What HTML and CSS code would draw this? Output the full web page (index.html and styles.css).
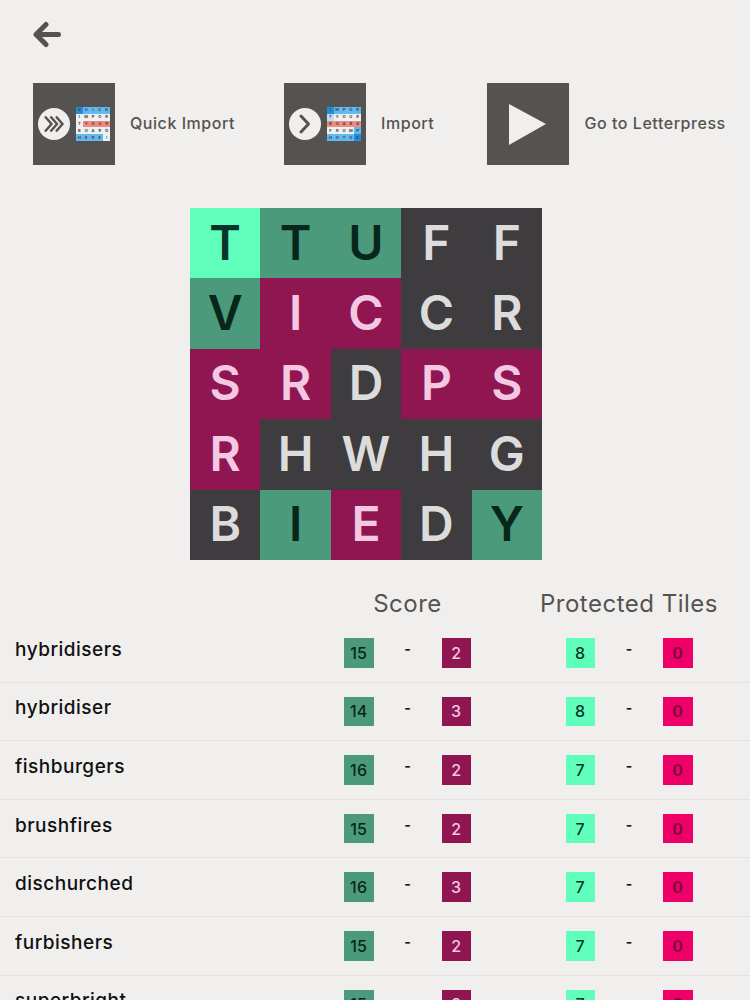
FILE: index.html
```html
<!DOCTYPE html>
<html lang="en">
<head>
  <meta charset="UTF-8" />
  <meta name="viewport" content="width=device-width, initial-scale=1" />
  <title>Letterpress Solver</title>
  <link rel="stylesheet" href="styles.css">
</head>
<body>

  <div class="top">
    <svg class="back" width="30" height="27" viewBox="0 0 30 27">
      <path d="M4 13.500H25.500M13 3.500L3 13.500L13 23.500" fill="none" stroke="#555351" stroke-width="5" stroke-linecap="round" stroke-linejoin="round" />
    </svg>

    <div class="actions">
      <div class="action">
        <div class="tile">
          <svg width="32" height="32" viewBox="0 0 32 32">
            <circle cx="16" cy="16" r="16" fill="#f0efed" />
            <path d="M7 8.500L13.500 16L7 23.500M12.500 8.500L19 16L12.500 23.500M18 8.500L24.500 16L18 23.500" fill="none" stroke="#555351" stroke-width="2.400" />
          </svg>
          <div class="mini">
            <span class="b2">Q</span><span class="b">U</span><span class="b">I</span><span class="b">C</span><span class="b">K</span>
            <span>I</span><span>M</span><span>P</span><span>O</span><span>R</span>
            <span>T</span><span class="r">Y</span><span class="r">O</span><span class="r">U</span><span class="r">R</span>
            <span>B</span><span>O</span><span>A</span><span>R</span><span>D</span>
            <span class="b">H</span><span class="b">E</span><span class="b">R</span><span class="b">E</span><span>!</span>
          </div>
        </div>
        <span class="label">Quick Import</span>
      </div>

      <div class="action">
        <div class="tile">
          <svg width="32" height="32" viewBox="0 0 32 32">
            <circle cx="16" cy="16" r="16" fill="#f0efed" />
            <path d="M12 8L19.500 16L12 24" fill="none" stroke="#555351" stroke-width="3" stroke-linecap="round" stroke-linejoin="round" />
          </svg>
          <div class="mini">
            <span class="b2">I</span><span class="b">M</span><span class="b">P</span><span class="b">O</span><span class="b">R</span>
            <span class="lb">T</span><span>Y</span><span>O</span><span>U</span><span>R</span>
            <span class="r">B</span><span class="r">O</span><span class="r">A</span><span class="r">R</span><span class="r">D</span>
            <span>F</span><span>R</span><span>O</span><span>M</span><span class="b">P</span>
            <span class="b">H</span><span class="b">O</span><span class="b">T</span><span class="b">O</span><span class="b2">S</span>
          </div>
        </div>
        <span class="label">Import</span>
      </div>

      <div class="action">
        <div class="tile">
          <svg width="82" height="82" viewBox="0 0 82 82" class="play">
            <polygon points="22,21 59,41 22,62" fill="#f0efed" />
          </svg>
        </div>
        <span class="label">Go to Letterpress</span>
      </div>
    </div>
  </div>

  <div class="board">
    <div class="cell mint">T</div><div class="cell green">T</div><div class="cell green">U</div><div class="cell dark">F</div><div class="cell dark">F</div>
    <div class="cell green">V</div><div class="cell maroon">I</div><div class="cell maroon">C</div><div class="cell dark">C</div><div class="cell dark">R</div>
    <div class="cell maroon">S</div><div class="cell maroon">R</div><div class="cell dark">D</div><div class="cell maroon">P</div><div class="cell maroon">S</div>
    <div class="cell maroon">R</div><div class="cell dark">H</div><div class="cell dark">W</div><div class="cell dark">H</div><div class="cell dark">G</div>
    <div class="cell dark">B</div><div class="cell green">I</div><div class="cell maroon">E</div><div class="cell dark">D</div><div class="cell green">Y</div>
  </div>

  <div class="head">
    <div class="pair">Score</div>
    <div class="pair">Protected Tiles</div>
  </div>

  <div class="row">
    <div class="word">hybridisers</div>
    <div class="pair"><span class="num green">15</span><span class="dash">-</span><span class="num maroon">2</span></div>
    <div class="pair"><span class="num mint">8</span><span class="dash">-</span><span class="num pink">0</span></div>
  </div>
  <div class="row">
    <div class="word">hybridiser</div>
    <div class="pair"><span class="num green">14</span><span class="dash">-</span><span class="num maroon">3</span></div>
    <div class="pair"><span class="num mint">8</span><span class="dash">-</span><span class="num pink">0</span></div>
  </div>
  <div class="row">
    <div class="word">fishburgers</div>
    <div class="pair"><span class="num green">16</span><span class="dash">-</span><span class="num maroon">2</span></div>
    <div class="pair"><span class="num mint">7</span><span class="dash">-</span><span class="num pink">0</span></div>
  </div>
  <div class="row">
    <div class="word">brushfires</div>
    <div class="pair"><span class="num green">15</span><span class="dash">-</span><span class="num maroon">2</span></div>
    <div class="pair"><span class="num mint">7</span><span class="dash">-</span><span class="num pink">0</span></div>
  </div>
  <div class="row">
    <div class="word">dischurched</div>
    <div class="pair"><span class="num green">16</span><span class="dash">-</span><span class="num maroon">3</span></div>
    <div class="pair"><span class="num mint">7</span><span class="dash">-</span><span class="num pink">0</span></div>
  </div>
  <div class="row">
    <div class="word">furbishers</div>
    <div class="pair"><span class="num green">15</span><span class="dash">-</span><span class="num maroon">2</span></div>
    <div class="pair"><span class="num mint">7</span><span class="dash">-</span><span class="num pink">0</span></div>
  </div>
  <div class="row">
    <div class="word">superbright</div>
    <div class="pair"><span class="num green">15</span><span class="dash">-</span><span class="num maroon">2</span></div>
    <div class="pair"><span class="num mint">7</span><span class="dash">-</span><span class="num pink">0</span></div>
  </div>

</body>
</html>
```

FILE: styles.css
```css
html, body {
  height: 100%;
  overflow: hidden;
}
body {
  margin: 0;
  background: #f0efed;
  color: #555351;
  font-family: Inter, "Liberation Sans", sans-serif;
}
.top {
  padding: 21px 0 0 33px;
}
.back {
  display: block;
  height: 27px;
}
.actions {
  display: flex;
  gap: 49px;
  margin-top: 35px;
}
.action {
  display: flex;
  align-items: center;
  gap: 15px;
}
.action:nth-child(2) {
  margin-right: 4px;
}
.tile {
  width: 82px;
  height: 82px;
  box-sizing: border-box;
  padding-left: 5px;
  display: flex;
  align-items: center;
  gap: 6px;
  background: #555351;
}
.play {
  margin-left: -5px;
}
.label {
  margin-bottom: 2px;
  font-size: 16px;
  font-weight: 500;
  letter-spacing: 0.55px;
  white-space: nowrap;
}
.mini {
  width: 34px;
  height: 34px;
  display: grid;
  grid-template-columns: repeat(5, 1fr);
  grid-template-rows: repeat(5, 1fr);
  background: #eef0f2;
  color: #444;
  font-size: 4px;
  font-weight: 700;
  line-height: 1;
  text-align: center;
}
.mini span {
  display: flex;
  align-items: center;
  justify-content: center;
}
.mini .b { background: #62b9f0; }
.mini .lb { background: #b9dff6; }
.mini .b2 { background: #1f8fdc; }
.mini .r { background: #ee8c80; }

.board {
  width: 352px;
  height: 352px;
  margin: 43px 0 0 190px;
  display: grid;
  grid-template-columns: repeat(5, 1fr);
  grid-template-rows: repeat(5, 1fr);
}
.cell {
  display: flex;
  align-items: center;
  justify-content: center;
  padding-bottom: 2px;
  font-size: 48px;
  font-weight: 600;
}
.dark { background: #3e3c3e; color: #dddcdc; }
.green { background: #4b9a7c; color: #07271d; }
.mint { background: #5fffbb; color: #07332a; }
.maroon { background: #8f1650; color: #f4c8e2; }
.pink { background: #ef0068; color: #76093d; }

.head {
  height: 64px;
  box-sizing: border-box;
  padding: 22px 57.500px 0 0;
  display: flex;
  justify-content: flex-end;
  align-items: center;
  font-size: 24px;
  font-weight: 400;
  letter-spacing: 0.5px;
}
.head .pair {
  justify-content: center;
  white-space: nowrap;
}
.row {
  height: 58.600px;
  box-sizing: border-box;
  display: flex;
  align-items: center;
  padding: 0 57.500px 0 15px;
  border-bottom: 1px solid #e3e2e0;
}
.word {
  flex: 1;
  margin-bottom: 7px;
  color: #111;
  font-size: 19px;
  font-weight: 500;
  letter-spacing: 0.5px;
}
.pair {
  width: 127px;
  margin-left: 94.500px;
  display: flex;
  justify-content: space-between;
  align-items: center;
}
.word + .pair {
  margin-left: 0;
}
.num {
  width: 29.500px;
  height: 29.500px;
  display: flex;
  align-items: center;
  justify-content: center;
  font-size: 16px;
  font-weight: 500;
  letter-spacing: 0.3px;
}
.num.pink {
  font-weight: 600;
}
.dash {
  margin-bottom: 8px;
  color: #1b1b1b;
  font-size: 14px;
  font-weight: 700;
}
```
